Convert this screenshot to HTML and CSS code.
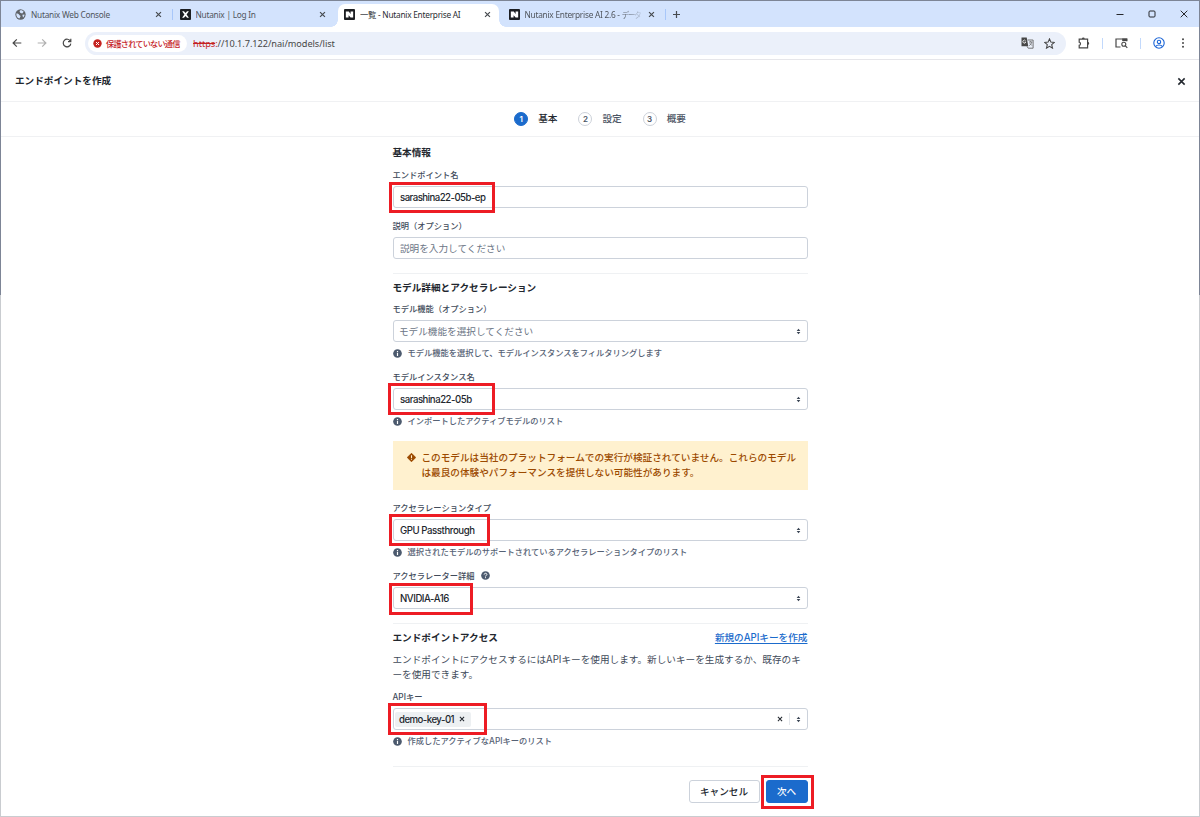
FILE: index.html
```html
<!DOCTYPE html>
<html lang="ja">
<head>
    <meta charset="UTF-8">
    <meta name="viewport" content="width=device-width, initial-scale=1.0">
    <title>一覧 - Nutanix Enterprise AI</title>
    <link rel="stylesheet" href="styles.css">
</head>
<body>
<svg class="defs" width="0" height="0">
    <symbol id="x" viewBox="0 0 10 10"><path d="M1.5 1.5l7 7M8.5 1.5l-7 7" fill="none" stroke="currentColor" stroke-width="1.7"/></symbol>
    <symbol id="sort" viewBox="0 0 6 8"><path d="M3 .6L5.200 3.3H.8zM3 7.400L.8 4.700h4.400z" fill="currentColor"/></symbol>
    <symbol id="info" viewBox="0 0 10 10"><circle cx="5" cy="5" r="4.8" fill="currentColor"/><path d="M5 2.2v1.3M5 4.5v3.3" stroke="#fff" stroke-width="1.3"/></symbol>
    <symbol id="nlogo" viewBox="0 0 12 12"><rect width="12" height="12" rx="1" fill="#1c1e22"/><path d="M2 2.8h3.2l2 2.6V2.8H10v6.5H7.2L5 6.7v2.6H2z" fill="#fff"/></symbol>
</svg>
<div class="window">
    <div class="tabs">
        <div class="tab">
            <svg class="fav" viewBox="0 0 12 12"><circle cx="6" cy="6" r="5.6" fill="#5f6368"/><path d="M1.4 4.8c1.5 0 2.8.3 3.2 1.4.2.9 1.6.7 1.4 1.9L4.9 10.4C2.6 9.8 1.3 8 1.4 4.8zM5.4 1.6c1.9-.5 3.3.4 4.1 1.5L7.9 4.8 6 4.4 5 3zM8 6.4l2.4-.5c0 1.6-.7 2.7-1.7 3.4z" fill="#d3e3fd"/></svg>
            <span class="name">Nutanix Web Console</span>
            <svg class="close"><use href="#x"/></svg>
        </div>
        <div class="tab line">
            <svg class="fav" viewBox="0 0 12 12"><rect width="12" height="12" rx="1" fill="#1c1e22"/><path d="M2.300 2.500h2L6 4.300l1.700-1.800h2L7.200 6l2.500 3.500h-2L6 7.600 4.300 9.500h-2L4.800 6z" fill="#fff"/></svg>
            <span class="name">Nutanix | Log In</span>
            <svg class="close"><use href="#x"/></svg>
        </div>
        <div class="tab active">
            <svg class="fav"><use href="#nlogo"/></svg>
            <span class="name">一覧 - Nutanix Enterprise AI</span>
            <svg class="close"><use href="#x"/></svg>
        </div>
        <div class="tab">
            <svg class="fav"><use href="#nlogo"/></svg>
            <span class="name fade">Nutanix Enterprise AI 2.6 - <span class="kana">データ</span></span>
            <svg class="close"><use href="#x"/></svg>
        </div>
        <div class="newtab line">
            <svg width="9" height="9" viewBox="0 0 9 9"><path d="M4.5 1v7M1 4.5h7" stroke="#474b50" stroke-width="1.2"/></svg>
        </div>
        <div class="controls">
            <svg width="8" height="8" viewBox="0 0 8 8"><path d="M.5 4.5h7"/></svg>
            <svg width="8" height="8" viewBox="0 0 8 8"><rect x="1" y="1" width="6" height="6" rx="1"/></svg>
            <svg width="8" height="8" viewBox="0 0 8 8"><path d="M.7.7l6.6 6.6M7.3.7L.7 7.3"/></svg>
        </div>
    </div>
    <div class="toolbar">
        <svg class="nav" viewBox="0 0 10 10"><path d="M9.3 5H1.2M4.8 1.3L1.1 5l3.7 3.7"/></svg>
        <svg class="nav off" viewBox="0 0 10 10"><path d="M.7 5h8.1M5.2 1.3L8.9 5 5.2 8.7"/></svg>
        <svg class="nav" viewBox="0 0 10 10"><path d="M8.4 3.2A3.8 3.8 0 1 0 8.8 5.6M8.8.8v2.8H6"/></svg>
        <div class="omnibox">
            <div class="chip">
                <svg width="9" height="9" viewBox="0 0 9 9"><circle cx="4.5" cy="4.5" r="4.2" fill="#c5221f"/><path d="M3 3l3 3M6 3L3 6" stroke="#fff" stroke-width="1"/></svg>
                <span>保護されていない通信</span>
            </div>
            <span class="url"><s>https</s><i>:</i>//10.1.7.122/nai/models/list</span>
            <svg class="translate" width="13" height="12" viewBox="0 0 13 12"><path d="M.5.5h5.2l1.6 8.8H.5z" fill="#474747"/><path d="M6.6 3h5.5v8.2H7.2L6 9.3" fill="none" stroke="#666" stroke-width=".9"/><path d="M8 5h3.3M9.6 4.2V5M10.7 5.2C10.3 7 9.2 8 8.2 8.6M8.8 6.3l2 2.2" fill="none" stroke="#666" stroke-width=".8"/><path d="M4.6 3.8a1.5 1.5 0 1 0 .2 1.3H3.6" fill="none" stroke="#fff" stroke-width=".8"/></svg>
            <svg width="11" height="11" viewBox="0 0 11 11"><path d="M5.5.9l1.4 3.2 3.4.3-2.6 2.3.8 3.4-3-1.8-3 1.8.8-3.4L.7 4.4l3.4-.3z" fill="none" stroke="#474747" stroke-width="1.1"/></svg>
        </div>
        <div class="actions">
            <svg width="12" height="12" viewBox="0 0 12 12"><path d="M1.200 2.200h8.400v8.600H1.200V8.300c1.700-.2 1.700-3 0-3.200z" fill="none" stroke="#474747" stroke-width="1.2"/><path d="M3.900 2a1.400 1.400 0 0 1 2.800 0zM9.800 5a1.400 1.400 0 0 1 0 2.800z" fill="#474747"/></svg>
            <span class="sep"></span>
            <svg width="13" height="12" viewBox="0 0 13 12"><path d="M5.5 10H1V2h10.8v2.2" fill="none" stroke="#474747" stroke-width="1.2"/><path d="M7.2 1.5h5v2.6h-5z" fill="#474747"/><circle cx="8.8" cy="7.2" r="2" fill="none" stroke="#474747" stroke-width="1.1"/><path d="M10.2 8.7l2.1 2.1" stroke="#474747" stroke-width="1.2"/></svg>
            <span class="sep"></span>
            <svg width="12" height="12" viewBox="0 0 12 12"><g fill="none" stroke="#1a64d6" stroke-width="1.1"><circle cx="6" cy="6" r="5.200"/><circle cx="6" cy="4.9" r="1.7"/><path d="M2.6 9.5c1.4-2.1 5.4-2.1 6.8 0"/></g></svg>
            <svg class="menu" width="4" height="12" viewBox="0 0 4 12" fill="#474747"><circle cx="2" cy="2.3" r="1"/><circle cx="2" cy="6" r="1"/><circle cx="2" cy="9.7" r="1"/></svg>
        </div>
    </div>

    <div class="header">
        <h1>エンドポイントを作成</h1>
        <svg width="9" height="9"><use href="#x"/></svg>
    </div>
    <div class="steps">
        <div class="step current"><b>1</b><span>基本</span></div>
        <div class="step"><b>2</b><span>設定</span></div>
        <div class="step"><b>3</b><span>概要</span></div>
    </div>

    <div class="form">
        <h2>基本情報</h2>
        <div class="field">
            <label>エンドポイント名</label>
            <div class="input"><span class="v-name">sarashina22-05b-ep</span><div class="mark m1"></div></div>
        </div>
        <div class="field">
            <label>説明（オプション）</label>
            <div class="input placeholder">説明を入力してください</div>
        </div>
        <hr>
        <h2>モデル詳細とアクセラレーション</h2>
        <div class="field">
            <label>モデル機能（オプション）</label>
            <div class="input select placeholder"><span>モデル機能を選択してください</span><svg class="sort"><use href="#sort"/></svg></div>
            <div class="hint"><svg><use href="#info"/></svg><span>モデル機能を選択して、モデルインスタンスをフィルタリングします</span></div>
        </div>
        <div class="field">
            <label>モデルインスタンス名</label>
            <div class="input"><span class="v-model">sarashina22-05b</span><svg class="sort"><use href="#sort"/></svg><div class="mark m2"></div></div>
            <div class="hint"><svg><use href="#info"/></svg><span>インポートしたアクティブモデルのリスト</span></div>
        </div>
        <div class="warning">
            <svg viewBox="0 0 10 10"><path d="M5 .3L9.7 5 5 9.7.3 5z" fill="#9c4a00" stroke="#9c4a00" stroke-linejoin="round" stroke-width="1"/><path d="M5 2.5v3M5 6.4v1.2" stroke="#fff1cf" stroke-width="1.2"/></svg>
            <p>このモデルは当社のプラットフォームでの実行が検証されていません。これらのモデルは最良の体験やパフォーマンスを提供しない可能性があります。</p>
        </div>
        <div class="field">
            <label>アクセラレーションタイプ</label>
            <div class="input"><span class="v-type">GPU Passthrough</span><svg class="sort"><use href="#sort"/></svg><div class="mark m3"></div></div>
            <div class="hint"><svg><use href="#info"/></svg><span>選択されたモデルのサポートされているアクセラレーションタイプのリスト</span></div>
        </div>
        <div class="field">
            <label>アクセラレーター詳細 <svg viewBox="0 0 10 10"><circle cx="5" cy="5" r="4.8" fill="#4c5a6e"/><path d="M3.5 4c0-2 3.200-1.900 3 0C6.400 5 5 4.900 5 6.100M5 6.900v1.100" fill="none" stroke="#fff" stroke-width="1.100"/></svg></label>
            <div class="input"><span class="v-gpu">NVIDIA-A16</span><svg class="sort"><use href="#sort"/></svg><div class="mark m4"></div></div>
        </div>
        <hr>
        <div class="access">
            <h2>エンドポイントアクセス</h2>
            <a href="#">新規のAPIキーを作成</a>
        </div>
        <p class="text">エンドポイントにアクセスするにはAPIキーを使用します。新しいキーを生成するか、既存のキーを使用できます。</p>
        <div class="field">
            <label>APIキー</label>
            <div class="input multi">
                <div class="tag"><span>demo-key-01</span><svg width="6" height="6"><use href="#x"/></svg></div>
                <svg class="clear" width="6" height="6"><use href="#x"/></svg>
                <span class="divider"></span>
                <svg class="sort"><use href="#sort"/></svg>
                <div class="mark m5"></div>
            </div>
            <div class="hint"><svg><use href="#info"/></svg><span>作成したアクティブなAPIキーのリスト</span></div>
        </div>
        <hr class="last">
        <div class="buttons">
            <div class="button">キャンセル</div>
            <div class="button primary">次へ<div class="mark m6"></div></div>
        </div>
    </div>
</div>
</body>
</html>
```
FILE: styles.css
```css
*{
    box-sizing: border-box;
}
body{
    margin:0;
    height:817px;
    padding:1px;
    overflow:hidden;
    background: linear-gradient(#7d8596 0, #7d8596 295px, #c9ccd0 295px, #c9ccd0 100%);
    font-family: Inter, "Noto Sans CJK JP", sans-serif;
    font-size: 9.65px;
    color:#22272e;
}
h1, h2, p{
    margin:0;
}
svg{
    display:block;
    flex:none;
}
.defs{
    position:absolute;
}
.window{
    height:815px;
    background-color:#fff;
}

/* browser */
.tabs{
    display:flex;
    height:26px;
    padding:3px 0 0 8px;
    background-color:#d3e3fd;
    font-family:"Noto Sans", "Noto Sans CJK JP", sans-serif;
    font-size:8.3px;
    letter-spacing:-.25px;
    color:#50555c;
}
.tab{
    display:flex;
    align-items:center;
    width:164.5px;
    height:23px;
    padding:0 12px 3px 6px;
    position:relative;
}
.tab .fav{
    width:11px;
    height:11px;
    margin-right:5px;
}
.tab .name{
    flex:1;
    overflow:hidden;
    white-space:nowrap;
}
.tab .close{
    width:7px;
    height:7px;
    margin-left:7px;
    color:#474b50;
}
.tab.active{
    background-color:#fff;
    border-radius:7px 7px 0 0;
    width:161px;
    padding-right:8px;
    margin-right:3.5px;
    color:#2b2e33;
}
.tab.active:before, .tab.active:after{
    content:"";
    position:absolute;
    bottom:0;
    width:7px;
    height:7px;
}
.tab.active:before{
    left:-7px;
    background:radial-gradient(circle at 0 0, transparent 6.5px, #fff 7px);
}
.tab.active:after{
    right:-7px;
    background:radial-gradient(circle at 100% 0, transparent 6.5px, #fff 7px);
}
.line:before{
    content:"";
    position:absolute;
    left:-2px;
    top:5px;
    width:1px;
    height:11px;
    background-color:#a8c7fa;
}
.name.fade{
    -webkit-mask-image:linear-gradient(90deg, #000 82%, rgba(0,0,0,.2));
    mask-image:linear-gradient(90deg, #000 82%, rgba(0,0,0,.2));
}
.kana{
    font-size:7.5px;
    letter-spacing:-1.2px;
}
.newtab{
    position:relative;
    padding:6px 0 0 5px;
}
.controls{
    display:flex;
    gap:24px;
    margin-left:auto;
    padding:6px 11px 0 0;
    fill:none;
    stroke:#26282c;
}
.toolbar{
    display:flex;
    align-items:center;
    height:33px;
    padding:0 14px 0 11px;
    border-bottom:1px solid #e6e6ea;
}
.nav{
    width:10px;
    height:10px;
    margin-right:15px;
    fill:none;
    stroke:#474747;
    stroke-width:1.2;
}
.nav.off{
    stroke:#b0b0b0;
}
.omnibox{
    display:flex;
    align-items:center;
    width:981px;
    height:23px;
    margin-left:-2px;
    padding:0 11px 0 3px;
    border-radius:12px;
    background-color:#ebf0fa;
}
.chip{
    display:flex;
    align-items:center;
    gap:4px;
    height:17px;
    width:99px;
    padding-left:5px;
    border-radius:9px;
    background-color:#fff;
    color:#c5221f;
    font-family:"Noto Sans CJK JP", sans-serif;
    font-size:8.2px;
    letter-spacing:-.8px;
    font-weight:500;
    white-space:nowrap;
}
.url{
    flex:1;
    margin-left:6px;
    font-family:"Noto Sans", sans-serif;
    font-size:9.2px;
    letter-spacing:-.05px;
    color:#474747;
}
.url s, .url i{
    font-style:normal;
    color:#c5221f;
}
.translate{
    margin-right:10px;
}
.actions{
    display:flex;
    flex:1;
    align-items:center;
    gap:12px;
    padding-left:12px;
}
.menu{
    margin-left:auto;
}
.sep{
    width:1px;
    height:11px;
    background-color:#c2d9fc;
}

/* dialog */
.header{
    display:flex;
    align-items:center;
    justify-content:space-between;
    height:42px;
    padding:1px 13px 0 14px;
    border-bottom:1px solid #f0f1f3;
    color:#22272e;
}
.header h1, h2{
    font-size:9.65px;
    font-weight:700;
    line-height:14px;
}
.steps{
    display:flex;
    justify-content:center;
    align-items:center;
    gap:21px;
    height:35px;
    border-bottom:1px solid #f0f1f3;
}
.step{
    display:flex;
    align-items:center;
    gap:10px;
    color:#4c5564;
    font-weight:500;
    line-height:14px;
}
.step b{
    width:14px;
    height:14px;
    border:1px solid #ccd1d9;
    border-radius:50%;
    font-size:8px;
    font-weight:600;
    line-height:12px;
    text-align:center;
}
.step.current{
    color:#22272e;
}
.step.current b{
    color:#fff;
    border-color:#1b6bcc;
    background-color:#1b6bcc;
}
.form{
    width:415px;
    margin:0 auto;
    padding-top:9px;
}
h2{
    margin-bottom:9px;
}
hr{
    height:1px;
    margin:14px 0 7px;
    border:0;
    background-color:#eff1f3;
}
hr + h2{
    margin-bottom:8px;
}
.field + .field{
    margin-top:12px;
}
label{
    display:flex;
    align-items:center;
    height:12px;
    padding-bottom:2px;
    margin-bottom:5px;
    font-size:8.26px;
    font-weight:500;
    color:#414b5a;
}
label svg{
    width:9px;
    height:9px;
    margin:1px 0 0 6px;
}
.input{
    display:flex;
    align-items:center;
    position:relative;
    height:22px;
    padding:1px 7px 0 6.5px;
    border:1px solid #ccd2db;
    border-radius:3px;
    font-weight:500;
    white-space:nowrap;
}
.placeholder{
    padding:0 7px 0 6.5px;
    color:#6b7585;
    font-weight:400;
}
.select{
    padding-left:5.5px;
}
.sort{
    width:5px;
    height:7px;
    margin-left:auto;
    margin-right:-1px;
    color:#3a4554;
}
.v-name{ letter-spacing:-.53px; }
.v-model{ letter-spacing:-.48px; }
.v-type{ letter-spacing:-.43px; }
.v-gpu{ letter-spacing:-.45px; }
.hint{
    display:flex;
    align-items:center;
    height:12px;
    margin-top:5px;
    font-size:8.26px;
    color:#566275;
    font-weight:500;
}
.hint span{
    padding-bottom:2px;
}
.hint svg{
    width:9px;
    height:9px;
    margin-right:6px;
    color:#4c5a6e;
}
.warning{
    display:flex;
    height:49px;
    margin:14px 0 12px;
    padding:9px 8px 0 14px;
    background-color:#fff1cf;
    color:#9c4a00;
    font-weight:500;
    line-height:15.3px;
}
.warning svg{
    width:9px;
    height:9px;
    margin:3px 6px 0 0;
}
.access{
    display:flex;
    justify-content:space-between;
    line-height:14px;
}
.access a{
    color:#1b6bcc;
    font-weight:500;
    text-underline-offset:2px;
}
.access h2{
    margin:0;
}
.text{
    margin:7px 0 9px;
    line-height:15px;
    color:#414b5a;
}
.multi{
    padding:0 7px 0 1.5px;
}
.tag{
    display:flex;
    align-items:center;
    gap:5px;
    height:15px;
    width:76px;
    padding-left:4px;
    border-radius:2px;
    background-color:#edf0f2;
}
.tag span{
    letter-spacing:-.53px;
}
.clear{
    margin-left:auto;
}
.divider{
    width:1px;
    height:12px;
    margin:0 6px;
    background-color:#e3e6ea;
}
.divider + .sort{
    margin-left:0;
}
hr.last{
    margin:19px 0 13px;
}
.buttons{
    display:flex;
    justify-content:flex-end;
    gap:6px;
}
.button{
    position:relative;
    width:71px;
    height:23px;
    border:1px solid #ccd2db;
    border-radius:3px;
    font-weight:500;
    line-height:21px;
    text-align:center;
}
.button.primary{
    width:42px;
    color:#fff;
    border-color:#1b6bcc;
    background-color:#1b6bcc;
}

/* highlight frames */
.mark{
    position:absolute;
    border:3px solid #ed1c24;
}
.m1{ left:-5px; top:-5px; width:106px; height:31px; }
.m2{ left:-6px; top:-6px; width:107px; height:32px; }
.m3{ left:-5px; top:-6px; width:101px; height:32px; }
.m4{ left:-5px; top:-5px; width:84px; height:32px; }
.m5{ left:-6px; top:-6px; width:99px; height:32px; }
.m6{ left:-6px; top:-6px; width:53px; height:34px; }
```
